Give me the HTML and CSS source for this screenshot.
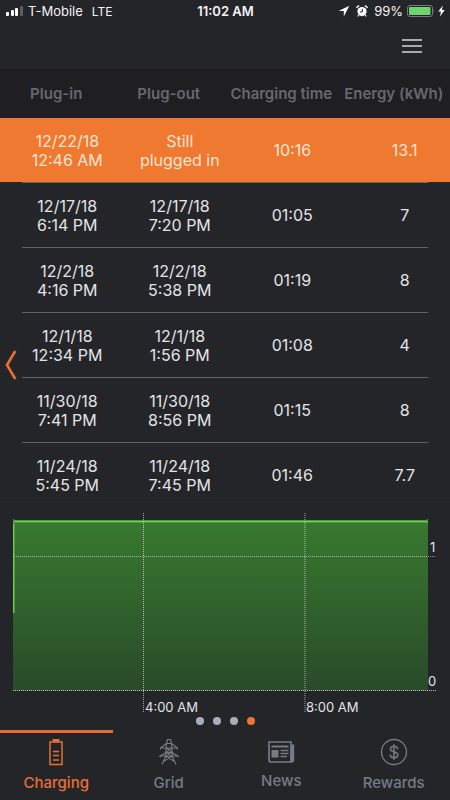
FILE: index.html
```html
<!DOCTYPE html>
<html lang="en">
<head>
<meta charset="utf-8">
<meta name="viewport" content="width=device-width, initial-scale=1">
<title>Charging log</title>
<link rel="stylesheet" href="styles.css">
</head>
<body>
<div class="app">
  <div class="status">
    <div class="status-side">
      <svg class="signal" width="18" height="10" viewBox="0 0 18 10" aria-hidden="true">
        <rect x="0" y="6" width="3" height="4" rx="1" fill="#fff"/>
        <rect x="5" y="4" width="3" height="6" rx="1" fill="#fff"/>
        <rect x="9" y="2" width="3" height="8" rx="1" fill="#fff"/>
        <rect x="14" y="0" width="3" height="10" rx="1" fill="#5d5e61"/>
      </svg>
      <span class="carrier">T-Mobile</span>
      <span class="network">LTE</span>
    </div>
    <span class="clock">11:02 AM</span>
    <div class="status-side status-right">
      <svg width="12" height="12" viewBox="0 0 12 12" aria-hidden="true"><path d="M11.3.7.6 6.1h5.2v5.3z" fill="#fff"/></svg>
      <svg class="alarm" width="12" height="12" viewBox="0 0 12 12" aria-hidden="true">
        <circle cx="6" cy="6.6" r="4.6" fill="#fff"/>
        <path d="M.7 3.1Q1 .9 3.3.8M11.3 3.1Q11 .9 8.7.8M2.8 10.2l-1 1.2M9.2 10.2l1 1.2" fill="none" stroke="#fff" stroke-width="1.3"/>
        <path d="M6.3 3.8v3.1H3.9" fill="none" stroke="#242529" stroke-width="1"/>
      </svg>
      <span class="percent">99%</span>
      <svg width="28" height="12" viewBox="0 0 28 12" aria-hidden="true">
        <rect x=".5" y=".5" width="25" height="11" rx="2.5" fill="none" stroke="#77797c"/>
        <rect x="2" y="2" width="21.5" height="8" rx="1" fill="#6fd46e"/>
        <path d="M26.5 4q1.5 2 0 4z" fill="#77797c"/>
      </svg>
      <svg class="bolt" width="7" height="12" viewBox="0 0 7 12" aria-hidden="true"><path d="M4.8.5.3 6.6h2.6L2 11.5 6.7 5H3.9z" fill="#fff"/></svg>
    </div>
  </div>

  <header class="topbar">
    <button class="menu" type="button" aria-label="Menu">
      <svg width="22" height="16" viewBox="0 0 22 16" aria-hidden="true"><path d="M1 2h20M1 8h20M1 14h20" stroke="#a9aaad" stroke-width="2"/></svg>
    </button>
  </header>

  <main class="content">
    <button class="back" type="button" aria-label="Previous">
      <svg width="12" height="30" viewBox="0 0 12 30" aria-hidden="true"><path d="M10.3 1 2 15l8.3 14" fill="none" stroke="#ea6f30" stroke-width="2.6"/></svg>
    </button>
    <div class="log">
      <table>
        <thead>
          <tr><th>Plug-in</th><th>Plug-out</th><th>Charging time</th><th>Energy (kWh)</th></tr>
        </thead>
        <tbody>
          <tr class="active"><td>12/22/18<br>12:46 AM</td><td>Still<br>plugged in</td><td>10:16</td><td>13.1</td></tr>
          <tr><td>12/17/18<br>6:14 PM</td><td>12/17/18<br>7:20 PM</td><td>01:05</td><td>7</td></tr>
          <tr><td>12/2/18<br>4:16 PM</td><td>12/2/18<br>5:38 PM</td><td>01:19</td><td>8</td></tr>
          <tr><td>12/1/18<br>12:34 PM</td><td>12/1/18<br>1:56 PM</td><td>01:08</td><td>4</td></tr>
          <tr><td>11/30/18<br>7:41 PM</td><td>11/30/18<br>8:56 PM</td><td>01:15</td><td>8</td></tr>
          <tr><td>11/24/18<br>5:45 PM</td><td>11/24/18<br>7:45 PM</td><td>01:46</td><td>7.7</td></tr>
        </tbody>
      </table>
    </div>
    <section class="chart">
      <svg class="plot" viewBox="0 0 450 218" role="img" aria-label="Charging power">
        <defs>
          <linearGradient id="fill" x1="0" y1="0" x2="0" y2="1">
            <stop offset="0" stop-color="#38792f"/>
            <stop offset="1" stop-color="#294a2a"/>
          </linearGradient>
        </defs>
        <rect x="13" y="21" width="415" height="170" fill="url(#fill)"/>
        <path d="M13 20h415v3H15v90h-2z" fill="#4a9c3a"/>
        <path d="M13.5 113V21.500h414" fill="none" stroke="#72cc58" stroke-width="1"/>
        <path d="M13.5 19v5M427.500 19v5" stroke="#4a9c3a"/>
        <g fill="none" stroke="#fff" stroke-dasharray="1 1">
          <path d="M14 56.500h422" stroke-opacity=".5"/>
          <path d="M13 190.500h423" stroke-opacity=".7"/>
          <path d="M143.500 13v199" stroke-opacity=".6"/>
          <path d="M305 13v199" stroke-width="2" stroke-opacity=".3"/>
        </g>
        <g class="axis">
          <text x="430" y="52">1</text>
          <text x="428" y="186">0</text>
          <text x="145" y="212">4:00 AM</text>
          <text x="306" y="212">8:00 AM</text>
        </g>
      </svg>
      <div class="dots"><i></i><i></i><i></i><i class="on"></i></div>
    </section>
  </main>

  <nav class="tabs">
    <a class="tab current" href="#charging">
      <svg width="28" height="28" viewBox="0 0 28 28" fill="none" stroke="currentColor" aria-hidden="true">
        <path d="M8 4h12v22.500H8z" stroke-width="1.500"/><path d="M10.500 1h7v3h-7z" fill="currentColor" stroke="none"/>
        <path d="M11 13.500h6M11 17.500h6M11 22h6" stroke-width="1.500"/>
      </svg>
      <span>Charging</span>
    </a>
    <a class="tab" href="#grid">
      <svg width="28" height="28" viewBox="0 0 28 28" fill="none" stroke="currentColor" stroke-width="1.100" stroke-linejoin="round" aria-hidden="true">
        <path d="M11.500 5.500 12.500 1.500h3l1 4 1 13.500L21 26.500M11.500 5.500l-1 13.500L7 26.500M11.500 5.500h5L22.500 10h-17zM5.500 10v1.500M22.500 10v1.500M11 14.500h6l6 3.500H5zM5 18v1.500M23 18v1.500"/>
        <path d="m11 10 6 4.500M17 10l-6 4.500 6.500 3.500M17 14.500 10.500 18l9 5.500M17.500 18l-9 5.500"/>
      </svg>
      <span>Grid</span>
    </a>
    <a class="tab news" href="#news">
      <svg width="28" height="24" viewBox="0 0 28 24" fill="none" stroke="currentColor" aria-hidden="true">
        <path d="M2 2h22v20H4q-2 0-2-2z" stroke-width="1.700"/>
        <path d="M24 4.500h3.200v15.500q0 2.500-2.500 2.500H23z" fill="currentColor" stroke="none"/>
        <path d="M4.500 5.500h17v2h-17zM4.500 10h7v7.500h-7z" fill="currentColor" stroke="none"/>
        <path d="M13.500 10.500h8M13.500 13.500h8M13.500 16.500h6.500" stroke-width="1.400"/>
      </svg>
      <span>News</span>
    </a>
    <a class="tab" href="#rewards">
      <svg width="28" height="28" viewBox="0 0 28 28" fill="none" stroke="currentColor" aria-hidden="true">
        <circle cx="14" cy="14" r="12.500" stroke-width="1.300"/>
        <path d="M17.700 11.200c-.2-2-1.700-2.900-3.700-2.900s-3.600 1-3.600 2.800c0 3.900 7.500 1.800 7.500 5.700 0 1.900-1.700 2.900-3.900 2.900s-3.800-1.100-3.900-3.100M14 6.200v15.600" stroke-width="1.500"/>
      </svg>
      <span>Rewards</span>
    </a>
  </nav>
</div>
</body>
</html>
```
FILE: styles.css
```css
* { box-sizing: border-box; }

body {
  margin: 0;
  background: #242529;
  color: #e3e4e6;
  font-family: Inter, "Liberation Sans", sans-serif;
}

button {
  padding: 0;
  border: 0;
  background: none;
}

svg { display: block; }

.app {
  display: flex;
  flex-direction: column;
  height: 100vh;
}

.status {
  display: flex;
  align-items: center;
  height: 22px;
  padding: 0 5px 0 6px;
  color: #f3f3f4;
  font-size: 13px;
}

.status-side {
  display: flex;
  flex: 1;
  align-items: center;
}

.status-right { justify-content: flex-end; }
.carrier { margin-left: 4px; }
.network { margin-left: 9px; font-size: 12px; }
.clock { font-weight: 600; }
.alarm { margin: 0 6px; }
.percent { margin-right: 4px; }
.bolt { margin-left: 3px; }

.topbar {
  display: flex;
  align-items: center;
  justify-content: flex-end;
  height: 47px;
  padding-right: 27px;
}

.content {
  position: relative;
  display: flex;
  flex: 1;
  flex-direction: column;
  min-height: 0;
}

.log {
  flex: 1;
  min-height: 0;
  overflow: hidden;
}

table {
  width: 100%;
  table-layout: fixed;
  border-spacing: 0;
}

th {
  height: 49px;
  padding: 0;
  background: #1f1e23;
  color: #68686d;
  font-size: 15px;
  font-weight: 600;
  white-space: nowrap;
}

td {
  height: 65px;
  padding: 0 0 0 22px;
  font-size: 16px;
  line-height: 19px;
  text-align: center;
}

tbody tr {
  background: linear-gradient(#606164, #606164) center bottom / calc(100% - 44px) 1px no-repeat;
}

.active {
  background:
    linear-gradient(#7c6556, #7c6556) center bottom / calc(100% - 44px) 1px no-repeat,
    linear-gradient(#ef7930, #ef7930) top / 100% 64px no-repeat;
  color: #ffe5d2;
}

.back {
  position: absolute;
  top: 281px;
  left: 5px;
}

.chart {
  padding-bottom: 12px;
  border-top: 1px solid #1f2024;
}

.plot { width: 100%; margin-top: -1px; }

.axis {
  fill: #e3e4e6;
  font-size: 13px;
}

.dots {
  display: flex;
  justify-content: center;
  gap: 9px;
  height: 0;
}

.dots i {
  width: 8px;
  height: 8px;
  margin-top: -1px;
  border-radius: 50%;
  background: #a8adba;
}

.dots .on { background: #ec7436; }

.tabs {
  display: flex;
  height: 70px;
}

.tab {
  display: flex;
  flex: 1 1 0;
  flex-direction: column;
  align-items: center;
  gap: 8px;
  padding-top: 5px;
  border-top: 3px solid transparent;
  color: #767c86;
  font-size: 15px;
  font-weight: 500;
  line-height: 18px;
  text-decoration: none;
}

.current {
  border-color: #e66c35;
  color: #e86f34;
}

.news { padding-top: 7px; }
```
